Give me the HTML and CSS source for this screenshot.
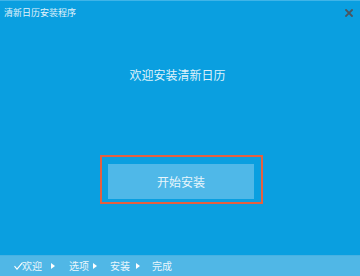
FILE: index.html
```html
<!DOCTYPE html>
<html lang="zh-CN">
<head>
<meta charset="utf-8">
<title>清新日历安装程序</title>
<link rel="stylesheet" href="styles.css">
</head>
<body>
<div class="window">
  <div class="titlebar">
    <span class="title">清新日历安装程序</span>
    <span class="close" aria-label="关闭">
      <svg width="8" height="8" viewBox="0 0 8 8"><path d="M1 1L7 7M7 1L1 7" stroke="#4a5560" stroke-width="1.8" stroke-linecap="square"/></svg>
    </span>
  </div>
  <div class="content">
    <div class="heading">欢迎安装清新日历</div>
    <div class="focus">
      <button class="start">开始安装</button>
    </div>
  </div>
  <div class="footer">
    <svg class="check" width="9" height="8" viewBox="0 0 9 8"><path d="M0.5 4.2L3 7.2L8.5 0.6" fill="none" stroke="#ffffff" stroke-width="1.1"/></svg>
    <span class="step s1">欢迎</span>
    <span class="arrow a1"></span>
    <span class="step s2">选项</span>
    <span class="arrow a2"></span>
    <span class="step s3">安装</span>
    <span class="arrow a3"></span>
    <span class="step s4">完成</span>
  </div>
</div>
</body>
</html>
```
FILE: styles.css
```css
* { box-sizing: border-box; }
html, body { margin: 0; padding: 0; }
body {
  width: 360px;
  height: 276px;
  overflow: hidden;
  font-family: "Noto Sans CJK SC", "Noto Sans", sans-serif;
  background: #0a9fe0;
}
.window {
  width: 360px;
  height: 276px;
  display: flex;
  flex-direction: column;
  background: #0a9fe0;
  border-top: 1px solid #3fb4e8;
}
.titlebar {
  height: 23px;
  display: flex;
  align-items: center;
  justify-content: space-between;
  padding: 0 7px 0 4px;
}
.title {
  font-size: 9px;
  line-height: 12px;
  color: #e2f3fb;
}
.close {
  display: flex;
  width: 8px;
  height: 8px;
}
.content {
  flex: 1;
  display: flex;
  flex-direction: column;
  align-items: center;
}
.heading {
  margin-top: 43px;
  margin-right: 5px;
  font-size: 12px;
  line-height: 16px;
  color: #dff2fb;
}
.focus {
  margin-top: 72px;
  margin-left: 3px;
  width: 163px;
  height: 49px;
  border: 2px solid #e5603f;
  padding: 7px 7px 3px 6px;
  display: flex;
}
.start {
  flex: 1;
  border: none;
  margin: 0;
  padding: 0;
  background: #4fb8e8;
  color: #e8f6fc;
  font-family: inherit;
  font-size: 12px;
  line-height: 16px;
}
.footer {
  height: 21px;
  background: #50b7e6;
  border-top: 1px solid #47b1e2;
  display: flex;
  align-items: center;
  padding-left: 14px;
  color: #eaf6fc;
  font-size: 10px;
  line-height: 12px;
}
.check { margin-top: -1px; }
.step { display: block; }
.s1 { margin-left: -1px; }
.arrow {
  width: 0;
  height: 0;
  border-top: 3px solid transparent;
  border-bottom: 3px solid transparent;
  border-left: 4px solid #ffffff;
}
.a1 { margin: 0 14px 0 9px; }
.a2 { margin: 0 13px 0 4px; }
.a3 { margin: 0 12px 0 6px; }
```
